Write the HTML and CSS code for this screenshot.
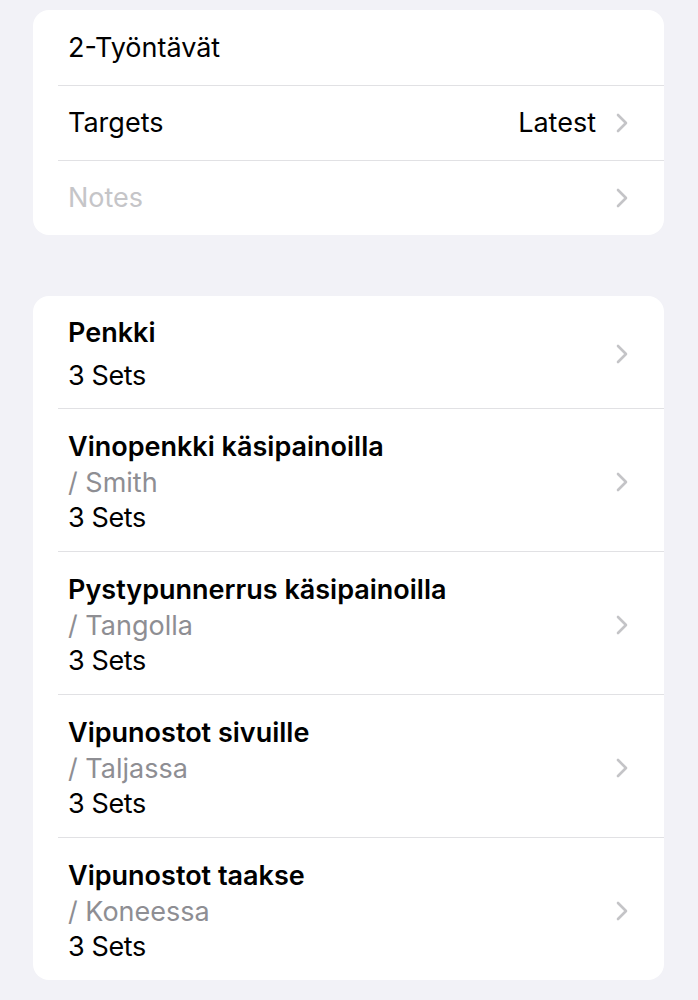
FILE: index.html
```html
<!DOCTYPE html>
<html lang="fi">
<head>
	<meta charset="UTF-8">
	<title>2-Työntävät</title>
	<link rel="stylesheet" href="styles.css">
</head>
<body>
	<div class="page">
		<ul class="group">
			<li class="cell">
				<span class="cell_label">2-Työntävät</span>
			</li>
			<li class="cell">
				<span class="cell_label">Targets</span>
				<span class="cell_value">Latest</span>
				<svg class="chev" viewBox="0 0 12 20"><path d="M2 2l8 8-8 8"/></svg>
			</li>
			<li class="cell">
				<span class="cell_label placeholder">Notes</span>
				<svg class="chev" viewBox="0 0 12 20"><path d="M2 2l8 8-8 8"/></svg>
			</li>
		</ul>

		<ul class="group">
			<li class="exercise short">
				<div class="ex_text">
					<div class="ex_name">Penkki</div>
					<div class="ex_sets">3 Sets</div>
				</div>
				<svg class="chev" viewBox="0 0 12 20"><path d="M2 2l8 8-8 8"/></svg>
			</li>
			<li class="exercise">
				<div class="ex_text">
					<div class="ex_name">Vinopenkki käsipainoilla</div>
					<div class="ex_alt">/ Smith</div>
					<div class="ex_sets">3 Sets</div>
				</div>
				<svg class="chev" viewBox="0 0 12 20"><path d="M2 2l8 8-8 8"/></svg>
			</li>
			<li class="exercise">
				<div class="ex_text">
					<div class="ex_name">Pystypunnerrus käsipainoilla</div>
					<div class="ex_alt">/ Tangolla</div>
					<div class="ex_sets">3 Sets</div>
				</div>
				<svg class="chev" viewBox="0 0 12 20"><path d="M2 2l8 8-8 8"/></svg>
			</li>
			<li class="exercise">
				<div class="ex_text">
					<div class="ex_name">Vipunostot sivuille</div>
					<div class="ex_alt">/ Taljassa</div>
					<div class="ex_sets">3 Sets</div>
				</div>
				<svg class="chev" viewBox="0 0 12 20"><path d="M2 2l8 8-8 8"/></svg>
			</li>
			<li class="exercise">
				<div class="ex_text">
					<div class="ex_name">Vipunostot taakse</div>
					<div class="ex_alt">/ Koneessa</div>
					<div class="ex_sets">3 Sets</div>
				</div>
				<svg class="chev" viewBox="0 0 12 20"><path d="M2 2l8 8-8 8"/></svg>
			</li>
		</ul>
	</div>
</body>
</html>
```

FILE: styles.css
```css
*{margin: 0; padding: 0; box-sizing: border-box;}
li{list-style: none;}
body{
	background: #f2f2f7;
	font: 27px Inter, "Noto Sans", sans-serif;
	color: #000;
}
.page{
	padding: 10px 34px 20px 33px;
	display: flex;
	flex-direction: column;
	gap: 61px;
}
.group{
	background: #fff;
	border-radius: 16px;
	overflow: hidden;
}
.group li{
	display: flex;
	align-items: center;
	padding-left: 35px;
	padding-right: 36px;
	position: relative;
}
.group li + li::before{
	content: "";
	position: absolute;
	top: 0;
	left: 25px;
	right: 0;
	height: 1px;
	background: #e1e1e4;
}
.cell{
	height: 75px;
}
.cell_label{
	flex: 1;
}
.placeholder{
	color: #c5c5c8;
}
.cell_value{
	margin-right: 20px;
}
.chev{
	width: 12px;
	height: 20px;
	flex: none;
	fill: none;
	stroke: #c4c4c7;
	stroke-width: 2.6;
	stroke-linecap: round;
	stroke-linejoin: round;
}
.exercise{
	padding-top: 20px;
	padding-bottom: 16px;
}
.ex_text{
	flex: 1;
}
.ex_name{
	font-weight: 600;
	line-height: 37px;
}
.ex_alt{
	color: #8e8e93;
	line-height: 35px;
}
.ex_sets{
	line-height: 35px;
	letter-spacing: -0.4px;
}
.short{
	padding-top: 18px;
	padding-bottom: 15px;
}
.short .ex_name{
	margin-bottom: 7px;
}
```
